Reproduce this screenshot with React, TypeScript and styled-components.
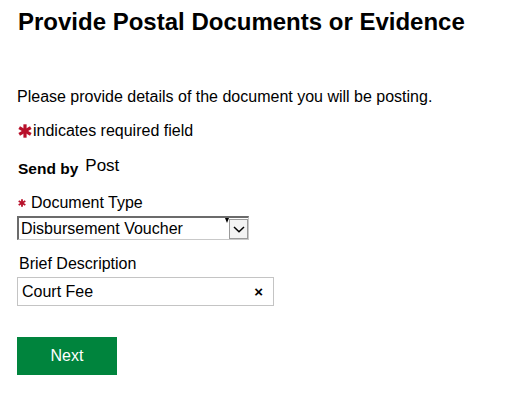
import React from "react";
import styled, { createGlobalStyle } from "styled-components";

const Global = createGlobalStyle`
  html, body { margin: 0; padding: 0; background: #fff; }
  body { font-family: Arial, "Liberation Sans", sans-serif; color: #000; }
`;

const Page = styled.div`
  padding: 8px 0 0 18px;
  display: flex;
  flex-direction: column;
  align-items: flex-start;
`;

const Heading = styled.h1`
  margin: 0;
  font-size: 24px;
  font-weight: bold;
  line-height: 28px;
`;

const Intro = styled.p`
  margin: 52px 0 0 -1px;
  font-size: 16px;
  line-height: 18px;
`;

const RequiredNote = styled.div`
  margin-top: 16px;
  display: flex;
  align-items: center;
  gap: 1px;
  font-size: 16px;
  line-height: 18px;
`;

const Star = styled.svg<{ $size: number }>`
  width: ${(p) => p.$size}px;
  height: ${(p) => p.$size}px;
  flex: none;
`;

const SendRow = styled.div`
  margin-top: 19px;
  display: flex;
  align-items: baseline;
  gap: 7px;
  line-height: 20px;
`;

const SendLabel = styled.span`
  font-weight: bold;
  font-size: 15.5px;
`;

const SendValue = styled.span`
  font-size: 17px;
  position: relative;
  top: -3px;
`;

const FieldLabel = styled.label<{ $top: number; $indent: number }>`
  margin: ${(p) => p.$top}px 0 0 ${(p) => p.$indent}px;
  display: flex;
  align-items: center;
  gap: 5px;
  font-size: 16px;
  line-height: 18px;
`;

const SelectBox = styled.div`
  margin: 4px 0 0 -1px;
  width: 229px;
  height: 21px;
  border-top: 2px solid #6b6b6b;
  border-left: 2px solid #6b6b6b;
  border-right: 1px solid #c9c9c9;
  border-bottom: 1px solid #c9c9c9;
  display: flex;
  align-items: center;
  position: relative;
  font-size: 16px;
`;

const SelectText = styled.span`
  flex: 1;
  padding-left: 2px;
  line-height: 18px;
`;

const Tick = styled.span`
  position: absolute;
  left: 206px;
  top: 0;
  width: 0;
  height: 0;
  border-left: 2px solid transparent;
  border-right: 2px solid transparent;
  border-top: 5px solid #000;
`;

const DropButton = styled.span`
  width: 19px;
  height: 20px;
  margin-top: 1px;
  border: 1px solid #9a9a9a;
  background: #f3f3f3;
  display: flex;
  align-items: center;
  justify-content: center;
  box-sizing: border-box;
`;

const InputBox = styled.div`
  margin: 4px 0 0 -1px;
  width: 257px;
  height: 29px;
  box-sizing: border-box;
  border: 1px solid #c4c4c4;
  display: flex;
  align-items: center;
  padding: 0 10px 0 4px;
  font-size: 16px;
`;

const InputText = styled.span`
  flex: 1;
`;

const ClearX = styled.span`
  font-size: 15px;
  font-weight: bold;
`;

const NextButton = styled.button`
  margin: 31px 0 0 -1px;
  width: 100px;
  height: 38px;
  border: none;
  background: #00843d;
  color: #fff;
  font-family: Arial, "Liberation Sans", sans-serif;
  font-size: 16px;
  padding: 0;
`;

const Asterisk = ({ size }: { size: number }) => (
  <Star $size={size} viewBox="0 0 14 14">
    <g stroke="#b8102a" strokeWidth="3.2" strokeLinecap="butt">
      <line x1="7" y1="0.3" x2="7" y2="13.7" />
      <line x1="1.2" y1="3.6" x2="12.8" y2="10.4" />
      <line x1="1.2" y1="10.4" x2="12.8" y2="3.6" />
    </g>
  </Star>
);

export default function App() {
  return (
    <>
      <Global />
      <Page>
        <Heading>Provide Postal Documents or Evidence</Heading>
        <Intro>Please provide details of the document you will be posting.</Intro>
        <RequiredNote>
          <Asterisk size={14} />
          <span>indicates required field</span>
        </RequiredNote>
        <SendRow>
          <SendLabel>Send by</SendLabel>
          <SendValue>Post</SendValue>
        </SendRow>
        <FieldLabel $top={15} $indent={0}>
          <Asterisk size={8} />
          <span>Document Type</span>
        </FieldLabel>
        <SelectBox>
          <SelectText>Disbursement Voucher</SelectText>
          <Tick />
          <DropButton>
            <svg width="12" height="7" viewBox="0 0 12 7">
              <polyline points="1,1 6,5.8 11,1" fill="none" stroke="#000" strokeWidth="1.5" />
            </svg>
          </DropButton>
        </SelectBox>
        <FieldLabel $top={15} $indent={1}>
          <span>Brief Description</span>
        </FieldLabel>
        <InputBox>
          <InputText>Court Fee</InputText>
          <ClearX>×</ClearX>
        </InputBox>
        <NextButton>Next</NextButton>
      </Page>
    </>
  );
}
